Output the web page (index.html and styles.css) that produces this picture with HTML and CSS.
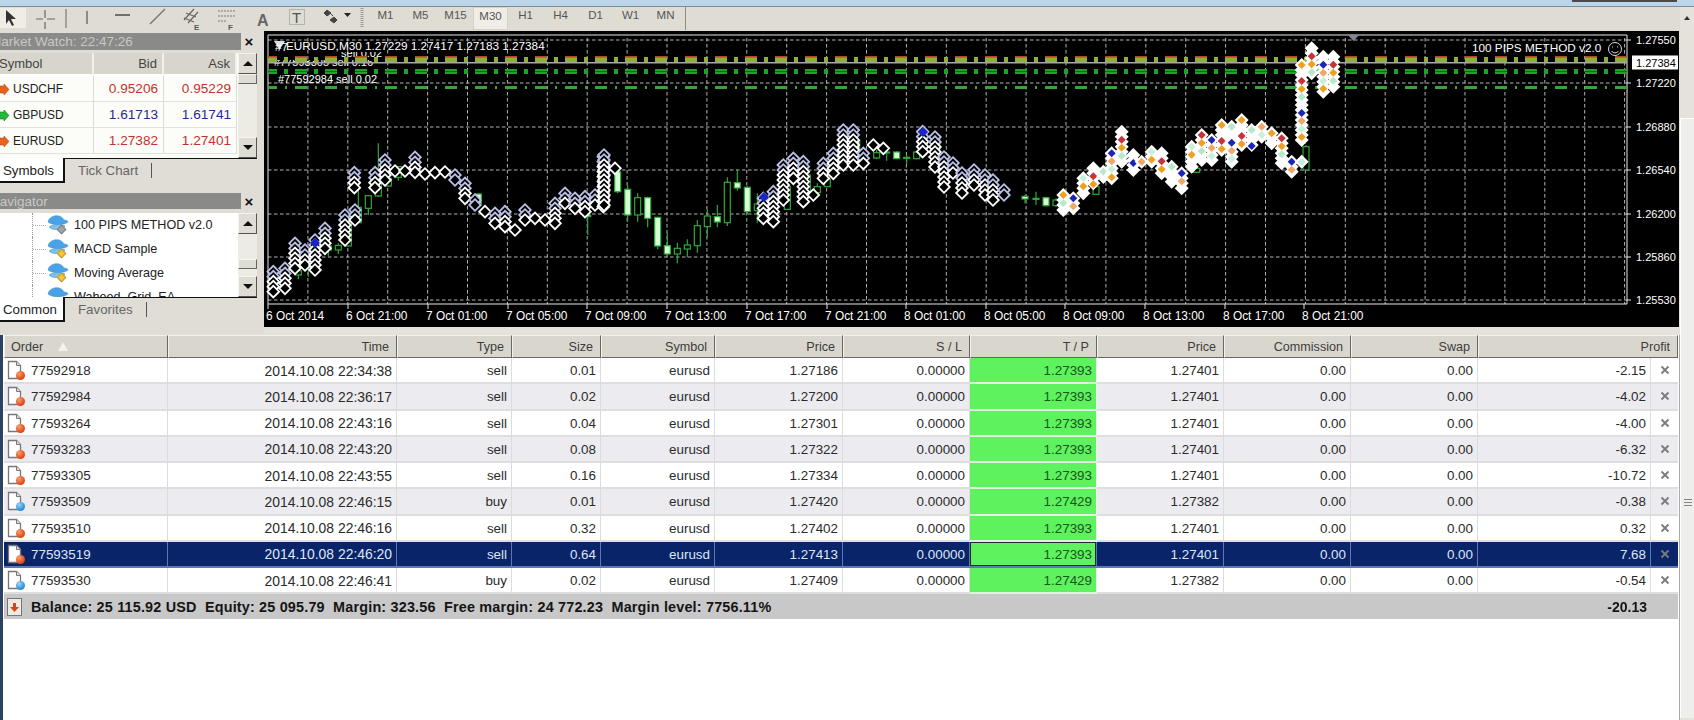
FILE: index.html
```html
<!DOCTYPE html>
<html>
<head>

    <meta charset="utf-8">
    <title>MetaTrader - EURUSD,M30</title>

    <link rel="stylesheet" href="styles.css">

</head>

<body>

<!-- shared icons -->
<svg class="icon-defs" width="0" height="0">
    <symbol id="iconPage" viewBox="0 0 18 20">
        <path d="M1.5 1.5h8l4 4v13h-12z" fill="#fff" stroke="#777" stroke-width="1.3"/>
        <path d="M9.5 1.5v4h4" fill="#ddd" stroke="#777"/>
    </symbol>
    <symbol id="iconHat" viewBox="0 0 22 22">
        <path d="M1 8c1-7 13-9 16-2 2 0 4 1 4 2-3 3-15 4-20 0z" fill="#4aa3e8" stroke="#3a86c0" stroke-width=".5"/>
        <path d="M2 13c4-3 12-3 16-1-3 4-12 5-16 1z" fill="#7cc2ee" stroke="#3a86c0" stroke-width=".5"/>
    </symbol>
    <symbol id="iconArrowRed" viewBox="0 0 12 13">
        <path d="M0 3h6V1l5 5.500-5 5.500v-2H0z" fill="#e8621e" stroke="#b34a14" stroke-width=".6"/>
    </symbol>
    <symbol id="iconArrowGreen" viewBox="0 0 12 13">
        <path d="M0 3h6V1l5 5.500-5 5.500v-2H0z" fill="#27b53a" stroke="#147a22" stroke-width=".6"/>
    </symbol>
    <symbol id="iconClose" viewBox="0 0 10 10">
        <path d="M1.5 1.5l7 7M8.5 1.5l-7 7" fill="none" stroke="#7b7b7b" stroke-width="1.8"/>
    </symbol>
</svg>

<div class="window">

    <div class="app-main">

        <div class="titlebar">
            <div class="titlebar-buttons"></div>
        </div>

        <div class="toolbar">

            <svg class="toolbar-tools" width="364" height="24" viewBox="0 7 364 24">
                <rect x="0" y="8" width="26" height="20" fill="#efede6"/>
                <path d="M6 10l0 14 3-4 3 6 2-1-3-6h5z" fill="#333"/>
                <path d="M45 10v8M45 22v7M36 19h7M47 19h8" stroke="#666" stroke-width="1.2"/>
                <path d="M66 9v19" stroke="#8f8d84" stroke-width="1.5"/>
                <path d="M87 11v13" stroke="#555" stroke-width="1.2"/>
                <path d="M115 15h15" stroke="#555" stroke-width="1.6"/>
                <path d="M150 24l15-15" stroke="#777" stroke-width="1.4"/>
                <path d="M184 20l10-11M188 23l10-11M186 13l10 4M184 18l10 4" stroke="#666" stroke-width="1.2"/>
                <text class="tool-letter-small" x="194" y="30">E</text>
                <path d="M218 11h17M218 16h17M218 21h8" stroke="#777" stroke-width="1.2" stroke-dasharray="2 1"/>
                <text class="tool-letter-small" x="228" y="30">F</text>
                <text class="tool-letter" x="257" y="26">A</text>
                <rect x="289.500" y="9.500" width="15" height="15" fill="none" stroke="#888" stroke-dasharray="1 1"/>
                <text class="tool-letter-t" x="292" y="23">T</text>
                <path d="M327 10l4 3-4 3-3-3zM334 17l3 3-3 3-4-3zM330 13l3 3" fill="#444" stroke="#444"/>
                <path d="M344 13h7l-3.500 4z" fill="#222"/>
                <path d="M362 8v20" stroke="#999" stroke-width="3" stroke-dasharray="1 1"/>
            </svg>

            <div class="timeframes">
                <span class="timeframe">M1</span>
                <span class="timeframe">M5</span>
                <span class="timeframe">M15</span>
                <span class="timeframe timeframe-active">M30</span>
                <span class="timeframe">H1</span>
                <span class="timeframe">H4</span>
                <span class="timeframe">D1</span>
                <span class="timeframe">W1</span>
                <span class="timeframe">MN</span>
            </div>

        </div>

        <div class="workspace">

            <div class="sidebar">

                <div class="panel-title panel-title-market">
                    <div class="panel-title-text">Market Watch: 22:47:26</div>
                    <span class="panel-close">×</span>
                </div>

                <div class="panel-body panel-body-market">
                    <table class="market-table">
                        <colgroup>
                            <col class="market-col-symbol">
                            <col class="market-col-bid">
                            <col class="market-col-ask">
                        </colgroup>
                        <tr>
                            <th class="market-symbol-head">Symbol</th>
                            <th>Bid</th>
                            <th>Ask</th>
                        </tr>
                        <tr>
                            <td class="market-symbol"><svg class="market-icon"><use href="#iconArrowRed"></use></svg>USDCHF</td>
                            <td class="price-down">0.95206</td>
                            <td class="price-down">0.95229</td>
                        </tr>
                        <tr>
                            <td class="market-symbol"><svg class="market-icon"><use href="#iconArrowGreen"></use></svg>GBPUSD</td>
                            <td class="price-up">1.61713</td>
                            <td class="price-up">1.61741</td>
                        </tr>
                        <tr>
                            <td class="market-symbol"><svg class="market-icon"><use href="#iconArrowRed"></use></svg>EURUSD</td>
                            <td class="price-down">1.27382</td>
                            <td class="price-down">1.27401</td>
                        </tr>
                    </table>
                    <div class="scrollbar">
                        <div class="scroll-button"><span class="arrow-up"></span></div>
                        <div class="scroll-track"><div class="scroll-thumb"></div></div>
                        <div class="scroll-button"><span class="arrow-down"></span></div>
                    </div>
                </div>

                <div class="tabs">
                    <span class="tab tab-active">Symbols</span>
                    <span class="tab">Tick Chart</span>
                    <span class="tab-separator"></span>
                </div>

                <div class="panel-title panel-title-nav">
                    <div class="panel-title-text">Navigator</div>
                    <span class="panel-close">×</span>
                </div>

                <div class="panel-body panel-body-nav">
                    <div class="nav-list">
                        <div class="nav-row">
                            <span class="tree-branch"></span>
                            <span class="nav-icon"><svg width="22" height="22"><use href="#iconHat"></use></svg><span class="nav-diamond nav-diamond-gray"></span></span>
                            <span class="nav-label">100 PIPS METHOD v2.0</span>
                        </div>
                        <div class="nav-row">
                            <span class="tree-branch"></span>
                            <span class="nav-icon"><svg width="22" height="22"><use href="#iconHat"></use></svg><span class="nav-diamond"></span></span>
                            <span class="nav-label">MACD Sample</span>
                        </div>
                        <div class="nav-row">
                            <span class="tree-branch"></span>
                            <span class="nav-icon"><svg width="22" height="22"><use href="#iconHat"></use></svg><span class="nav-diamond"></span></span>
                            <span class="nav-label">Moving Average</span>
                        </div>
                        <div class="nav-row">
                            <span class="tree-branch"></span>
                            <span class="nav-icon"><svg width="22" height="22"><use href="#iconHat"></use></svg><span class="nav-diamond"></span></span>
                            <span class="nav-label">Waheed_Grid_EA</span>
                        </div>
                    </div>
                    <div class="scrollbar">
                        <div class="scroll-button"><span class="arrow-up"></span></div>
                        <div class="scroll-track scroll-track-nav"><div class="scroll-thumb"></div></div>
                        <div class="scroll-button"><span class="arrow-down"></span></div>
                    </div>
                </div>

                <div class="tabs">
                    <span class="tab tab-active">Common</span>
                    <span class="tab">Favorites</span>
                    <span class="tab-separator"></span>
                </div>

            </div>

            <div class="chart">
                <svg class="chart-svg" width="1415" height="296" viewBox="264 31 1415 296">
                    <defs>
                        <clipPath id="clipLabelA"><rect x="270" y="60" width="115" height="7"></rect></clipPath>
                        <clipPath id="clipLabelB"><rect x="340" y="52" width="50" height="5"></rect></clipPath>
                    </defs>
                    <g class="chartGrid"></g>
                    <text class="chart-label" x="274" y="66" clip-path="url(#clipLabelA)">#77593305 sell 0.16</text>
                    <text class="chart-label" x="283" y="57" clip-path="url(#clipLabelB)">#77593264 sell 0.02</text>
                    <g class="chartLevels"></g>
                    <g class="chartCandles"></g>
                    <g class="chartMarkers"></g>

                    <path d="M274 41h11l-5.500 9z" fill="#ddd"/>
                    <text class="chart-label chart-label-wide" x="275" y="51">#7</text>
                    <text class="chart-label chart-label-wide" x="286" y="50">EURUSD,M30  1.27229 1.27417 1.27183 1.27384</text>
                    <text class="chart-label" x="278" y="83">#77592984 sell 0.02</text>
                    <text class="chart-label chart-label-wide" x="1472" y="52">100 PIPS METHOD v2.0</text>
                    <circle cx="1615" cy="49" r="6.500" fill="none" stroke="#ddd"/>
                    <path d="M1612 47h1M1617 47h1M1611.500 51c2 2.500 5 2.500 7 0" fill="none" stroke="#ddd"/>
                    <path d="M1348 35h11l-5.500 6z" fill="#7f8a96"/>

                    <rect x="1632" y="55.500" width="46" height="14" fill="#fff"/>
                    <text class="chart-axis chart-axis-dark" x="1636" y="67">1.27384</text>
                    <g class="chartAxis"></g>
                </svg>
            </div>

        </div>

        <div class="terminal">
            <table class="orders-table">
                <colgroup>
                    <col class="col-order"><col class="col-time"><col class="col-type"><col class="col-size">
                    <col class="col-symbol"><col class="col-price"><col class="col-mid"><col class="col-mid">
                    <col class="col-mid"><col class="col-mid"><col class="col-mid"><col class="col-profit">
                    <col class="col-close">
                </colgroup>
                <tr>
                    <th class="head-order">Order<span class="sort-arrow"></span></th>
                    <th>Time</th>
                    <th>Type</th>
                    <th>Size</th>
                    <th>Symbol</th>
                    <th>Price</th>
                    <th>S / L</th>
                    <th>T / P</th>
                    <th>Price</th>
                    <th>Commission</th>
                    <th>Swap</th>
                    <th colspan="2">Profit</th>
                </tr>
                <tr>
                    <td class="cell-order"><svg class="order-icon"><use href="#iconPage"></use></svg><span class="ball ball-sell"></span>77592918</td>
                    <td class="cell-time">2014.10.08 22:34:38</td><td>sell</td><td>0.01</td><td>eurusd</td><td>1.27186</td><td>0.00000</td>
                    <td class="cell-tp">1.27393</td><td>1.27401</td><td>0.00</td><td>0.00</td><td>-2.15</td>
                    <td class="cell-close"><svg class="close-icon"><use href="#iconClose"></use></svg></td>
                </tr>
                <tr class="row-even">
                    <td class="cell-order"><svg class="order-icon"><use href="#iconPage"></use></svg><span class="ball ball-sell"></span>77592984</td>
                    <td class="cell-time">2014.10.08 22:36:17</td><td>sell</td><td>0.02</td><td>eurusd</td><td>1.27200</td><td>0.00000</td>
                    <td class="cell-tp">1.27393</td><td>1.27401</td><td>0.00</td><td>0.00</td><td>-4.02</td>
                    <td class="cell-close"><svg class="close-icon"><use href="#iconClose"></use></svg></td>
                </tr>
                <tr>
                    <td class="cell-order"><svg class="order-icon"><use href="#iconPage"></use></svg><span class="ball ball-sell"></span>77593264</td>
                    <td class="cell-time">2014.10.08 22:43:16</td><td>sell</td><td>0.04</td><td>eurusd</td><td>1.27301</td><td>0.00000</td>
                    <td class="cell-tp">1.27393</td><td>1.27401</td><td>0.00</td><td>0.00</td><td>-4.00</td>
                    <td class="cell-close"><svg class="close-icon"><use href="#iconClose"></use></svg></td>
                </tr>
                <tr class="row-even">
                    <td class="cell-order"><svg class="order-icon"><use href="#iconPage"></use></svg><span class="ball ball-sell"></span>77593283</td>
                    <td class="cell-time">2014.10.08 22:43:20</td><td>sell</td><td>0.08</td><td>eurusd</td><td>1.27322</td><td>0.00000</td>
                    <td class="cell-tp">1.27393</td><td>1.27401</td><td>0.00</td><td>0.00</td><td>-6.32</td>
                    <td class="cell-close"><svg class="close-icon"><use href="#iconClose"></use></svg></td>
                </tr>
                <tr>
                    <td class="cell-order"><svg class="order-icon"><use href="#iconPage"></use></svg><span class="ball ball-sell"></span>77593305</td>
                    <td class="cell-time">2014.10.08 22:43:55</td><td>sell</td><td>0.16</td><td>eurusd</td><td>1.27334</td><td>0.00000</td>
                    <td class="cell-tp">1.27393</td><td>1.27401</td><td>0.00</td><td>0.00</td><td>-10.72</td>
                    <td class="cell-close"><svg class="close-icon"><use href="#iconClose"></use></svg></td>
                </tr>
                <tr class="row-even">
                    <td class="cell-order"><svg class="order-icon"><use href="#iconPage"></use></svg><span class="ball ball-buy"></span>77593509</td>
                    <td class="cell-time">2014.10.08 22:46:15</td><td>buy</td><td>0.01</td><td>eurusd</td><td>1.27420</td><td>0.00000</td>
                    <td class="cell-tp">1.27429</td><td>1.27382</td><td>0.00</td><td>0.00</td><td>-0.38</td>
                    <td class="cell-close"><svg class="close-icon"><use href="#iconClose"></use></svg></td>
                </tr>
                <tr>
                    <td class="cell-order"><svg class="order-icon"><use href="#iconPage"></use></svg><span class="ball ball-sell"></span>77593510</td>
                    <td class="cell-time">2014.10.08 22:46:16</td><td>sell</td><td>0.32</td><td>eurusd</td><td>1.27402</td><td>0.00000</td>
                    <td class="cell-tp">1.27393</td><td>1.27401</td><td>0.00</td><td>0.00</td><td>0.32</td>
                    <td class="cell-close"><svg class="close-icon"><use href="#iconClose"></use></svg></td>
                </tr>
                <tr class="row-selected">
                    <td class="cell-order"><svg class="order-icon"><use href="#iconPage"></use></svg><span class="ball ball-sell"></span>77593519</td>
                    <td class="cell-time">2014.10.08 22:46:20</td><td>sell</td><td>0.64</td><td>eurusd</td><td>1.27413</td><td>0.00000</td>
                    <td class="cell-tp">1.27393</td><td>1.27401</td><td>0.00</td><td>0.00</td><td>7.68</td>
                    <td class="cell-close"><svg class="close-icon"><use href="#iconClose"></use></svg></td>
                </tr>
                <tr>
                    <td class="cell-order"><svg class="order-icon"><use href="#iconPage"></use></svg><span class="ball ball-buy"></span>77593530</td>
                    <td class="cell-time">2014.10.08 22:46:41</td><td>buy</td><td>0.02</td><td>eurusd</td><td>1.27409</td><td>0.00000</td>
                    <td class="cell-tp">1.27429</td><td>1.27382</td><td>0.00</td><td>0.00</td><td>-0.54</td>
                    <td class="cell-close"><svg class="close-icon"><use href="#iconClose"></use></svg></td>
                </tr>
                <tr class="row-summary">
                    <td colspan="11" class="cell-summary"><span class="summary-icon"><svg width="9" height="11"><path d="M3 1h3v4h3l-4.500 5L0 5h3z" fill="#d8441c"/></svg></span>Balance: 25 115.92 USD&nbsp; Equity: 25 095.79&nbsp; Margin: 323.56&nbsp; Free margin: 24 772.23&nbsp; Margin level: 7756.11%</td>
                    <td class="cell-total">-20.13</td>
                    <td></td>
                </tr>
            </table>
        </div>

    </div>

    <div class="right-strip">
        <span class="strip-arrow"></span>
        <div class="strip-lower">
            <span class="strip-grip"></span>
        </div>
    </div>

</div>

<script src="chart.js"></script>

</body>
</html>
```

FILE: styles.css
```css
* {
    font-family: "Liberation Sans", Arial, sans-serif;
    box-sizing: border-box;
}

html, body {
    margin: 0;
    height: 720px;
    overflow: hidden;
    background: #fff;
}

.icon-defs {
    display: block;
    height: 0;
}

.window {
    display: flex;
    height: 720px;
    filter: blur(0.45px);
}

.app-main {
    width: 1680px;
    display: flex;
    flex-direction: column;
}

.titlebar {
    height: 7px;
    background: #bcd5e8;
    border-bottom: 1px solid #7f8d9a;
    margin-right: -14px;
    display: flex;
    justify-content: flex-end;
}

.titlebar-buttons {
    width: 105px;
    height: 2px;
    margin-right: 17px;
    background: #4a4a4a;
}

/* toolbar */

.toolbar {
    height: 24px;
    display: flex;
    background: #dfddd3;
    color: #555;
}

.toolbar-tools {
    display: block;
    flex-shrink: 0;
}

.tool-letter {
    font-size: 16px;
    font-weight: bold;
    fill: #666;
}

.tool-letter-small {
    font-size: 8px;
    font-weight: bold;
    fill: #555;
}

.tool-letter-t {
    font-size: 15px;
    fill: #555;
}

.timeframes {
    display: flex;
    padding-left: 4px;
    padding-right: 2px;
    border-right: 1px solid #8f8d84;
    height: 23px;
}

.timeframe {
    width: 35px;
    height: 23px;
    line-height: 17px;
    text-align: center;
    font-size: 11.500px;
    color: #555;
}

.timeframe-active {
    background: #efede6;
    border: 1px solid #d4d2c8;
}

/* main row */

.workspace {
    height: 304px;
    display: flex;
    background: #e4e2da;
}

.sidebar {
    width: 264px;
    height: 304px;
    flex-shrink: 0;
    overflow: hidden;
    padding-top: 2px;
    background: #dfddd5;
}

.panel-title {
    display: flex;
    width: 267px;
    margin-left: -10px;
    align-items: center;
}

.panel-title-market {
    height: 17px;
}

.panel-title-nav {
    height: 16px;
    margin-top: 8px;
}

.panel-title-text {
    width: 251px;
    height: 100%;
    background: #8a8a88;
    color: #c8c8c6;
    font-size: 13.500px;
    line-height: 17px;
    white-space: nowrap;
}

.panel-close {
    width: 16px;
    text-align: center;
    font-size: 15px;
    font-weight: bold;
    color: #111;
}

.panel-body {
    display: flex;
    width: 267px;
    margin-left: -10px;
    overflow: hidden;
    background: #fff;
}

.panel-body-market {
    height: 105px;
    margin-top: 3px;
    background: #fcfdf8;
}

.panel-body-nav {
    height: 84px;
    margin-top: 4px;
}

.market-table {
    width: 247px;
    height: 0;
    table-layout: fixed;
    border-collapse: separate;
    border-spacing: 0;
    flex-shrink: 0;
}

.market-col-symbol {
    width: 104px;
}

.market-col-bid {
    width: 70px;
}

.market-col-ask {
    width: 73px;
}

.market-table th {
    height: 23px;
    padding: 0 5px 0 0;
    background: #d8d6cc;
    border-right: 2px solid #f2f0e8;
    border-bottom: 2px solid #fff;
    color: #444;
    font-size: 13px;
    font-weight: normal;
    text-align: right;
}

.market-table th.market-symbol-head {
    padding-left: 9px;
    text-align: left;
}

.market-table td {
    height: 26px;
    padding: 0 5px 0 0;
    border-right: 1px solid #dcdcd6;
    border-bottom: 1px solid #e2e2dc;
    font-size: 13.600px;
    text-align: right;
}

.market-table td.market-symbol {
    padding-left: 8px;
    font-size: 12px;
    color: #222;
    text-align: left;
    white-space: nowrap;
}

.market-icon {
    width: 12px;
    height: 13px;
    margin-right: 3px;
    vertical-align: -3px;
}

.price-down {
    color: #c4332f;
}

.price-up {
    color: #27289b;
}

/* scrollbars */

.scrollbar {
    width: 19px;
    flex-shrink: 0;
    margin-left: 1px;
    display: flex;
    flex-direction: column;
    background: #ecebe4;
}

.scroll-button {
    height: 21px;
    flex-shrink: 0;
    display: flex;
    align-items: center;
    justify-content: center;
    background: #dfddd3;
    border: 1px solid;
    border-color: #f4f3ec #555 #555 #f4f3ec;
}

.arrow-up {
    border: 5px solid transparent;
    border-top: 0;
    border-bottom: 5px solid #111;
}

.arrow-down {
    border: 5px solid transparent;
    border-bottom: 0;
    border-top: 5px solid #111;
}

.scroll-track {
    flex: 1;
}

.scroll-thumb {
    height: 10px;
    background: #dfddd3;
    border: 1px solid;
    border-color: #f4f3ec #666 #666 #f4f3ec;
}

.scroll-track-nav .scroll-thumb {
    margin-top: 25px;
}

/* sidebar tabs */

.tabs {
    height: 27px;
    width: 267px;
    margin-left: -10px;
    display: flex;
    align-items: flex-start;
    border-top: 1px solid #111;
    color: #666;
}

.tab {
    height: 24px;
    line-height: 24px;
    padding: 0 13px;
    font-size: 13.300px;
    white-space: nowrap;
}

.tab-active {
    width: 75px;
    height: 25px;
    margin-top: -1px;
    padding: 0 0 0 13px;
    line-height: 25px;
    background: #fff;
    color: #222;
    border-right: 2px solid #111;
    border-bottom: 2px solid #111;
}

.tab-separator {
    width: 1px;
    height: 15px;
    margin-top: 4px;
    background: #555;
}

/* navigator */

.nav-list {
    width: 247px;
    flex-shrink: 0;
    overflow: hidden;
}

.nav-row {
    height: 24px;
    display: flex;
    align-items: center;
    white-space: nowrap;
}

.tree-branch {
    width: 15px;
    height: 24px;
    margin-left: 42px;
    border-left: 1px dotted #999;
    background: repeating-linear-gradient(90deg, #aaa 0 1px, transparent 1px 2px) center / 100% 1px no-repeat;
}

.nav-icon {
    width: 24px;
    height: 22px;
    flex-shrink: 0;
    display: block;
    position: relative;
    margin-right: 3px;
}

.nav-diamond {
    position: absolute;
    left: 11px;
    top: 12px;
    width: 7px;
    height: 7px;
    transform: rotate(45deg);
    background: #f1c53f;
    border: 1px solid #c49a30;
}

.nav-diamond-gray {
    background: #a4a4a4;
    border-color: #808080;
}

.nav-label {
    font-size: 12.600px;
    color: #222;
}

/* chart */

.chart {
    width: 1415px;
    height: 296px;
    flex-shrink: 0;
    background: #000;
}

.chart-svg {
    display: block;
}

.chart-label {
    font-size: 11px;
    fill: #fff;
}

.chart-label-wide {
    font-size: 11.750px;
}

.chart-axis {
    font-size: 11px;
    fill: #fff;
}

.chart-time {
    font-size: 11.900px;
    fill: #fff;
}

.chart-axis-dark {
    fill: #000;
}

/* terminal */

.terminal {
    flex: 1;
    background: #fff;
    border-left: 3px solid #2d4162;
    border-right: 1px solid #a9a9a9;
    padding-left: 1px;
}

.orders-table {
    width: 1674px;
    table-layout: fixed;
    border-collapse: separate;
    border-spacing: 0;
    color: #2b2b2b;
}

.col-order { width: 164px; }
.col-time { width: 229px; }
.col-type { width: 115px; }
.col-size { width: 89px; }
.col-symbol { width: 114px; }
.col-price { width: 128px; }
.col-mid { width: 127px; }
.col-profit { width: 173px; }
.col-close { width: 27px; }

.orders-table th {
    height: 23px;
    padding: 0 7px 0 0;
    background: #d9d7cd;
    border: 1px solid;
    border-color: #f3f2ea #666 #666 #f3f2ea;
    color: #3d3d3d;
    font-size: 12.600px;
    font-weight: normal;
    text-align: right;
}

.orders-table th.head-order {
    padding-left: 6px;
    text-align: left;
}

.sort-arrow {
    display: inline-block;
    margin-left: 15px;
    border: 5px solid transparent;
    border-top: 0;
    border-bottom: 9px solid #f2f1ea;
}

.orders-table td {
    height: 26.250px;
    padding: 1px 4px 0 0;
    border-right: 1px solid #dcdcdc;
    border-bottom: 2px solid #dedede;
    font-size: 13.400px;
    text-align: right;
    white-space: nowrap;
}

.orders-table td.cell-order {
    position: relative;
    padding-left: 27px;
    text-align: left;
}

.orders-table td.cell-time {
    font-size: 13.900px;
}

.order-icon {
    position: absolute;
    left: 3px;
    top: 2px;
    width: 18px;
    height: 20px;
}

.ball {
    position: absolute;
    left: 12px;
    top: 13px;
    width: 9px;
    height: 9px;
    border-radius: 50%;
}

.ball-sell {
    background: radial-gradient(circle at 35% 30%, #f4a070, #e04a18 65%);
}

.ball-buy {
    background: radial-gradient(circle at 35% 30%, #9fd4f6, #2c8fd8 65%);
}

.row-even td {
    background: #ecebef;
}

.row-selected td {
    background: #0a246a;
    color: #dfe6f6;
    border-right-color: #5f78b4;
    border-bottom-color: #5f78b4;
}

.orders-table td.cell-tp {
    background: #5ef25e;
    color: #17551f;
    border-right-color: #e8f8e8;
    border-bottom-color: #e0f2e0;
}

.row-selected td.cell-tp {
    box-shadow: inset 0 0 0 1px #1d2b2a;
    border-right-color: #5f78b4;
    border-bottom-color: #5f78b4;
}

.orders-table td.cell-close {
    padding: 0;
    border-right: 0;
    text-align: left;
}

.close-icon {
    display: block;
    width: 10px;
    height: 10px;
    margin-left: 9px;
}

.row-summary td {
    height: 25px;
    background: #c8c8c8;
    border: 0;
    color: #151515;
    font-weight: bold;
}

.orders-table .row-summary td.cell-summary {
    padding-left: 27px;
    position: relative;
    font-size: 14.400px;
    letter-spacing: 0.18px;
    text-align: left;
}

.orders-table .row-summary td.cell-total {
    font-size: 14px;
}

.summary-icon {
    position: absolute;
    left: 3px;
    top: 4px;
    width: 15px;
    height: 18px;
    background: #eceae2;
    border: 1px solid #777;
    display: flex;
    justify-content: center;
    align-items: center;
}

/* right edge of the window */

.right-strip {
    width: 14px;
    margin-top: 7px;
    background: #e4e2da;
    display: flex;
    flex-direction: column;
    align-items: center;
}

.strip-arrow {
    margin-top: 9px;
    border: 3px solid transparent;
    border-top: 0;
    border-bottom: 4px solid #333;
}

.strip-lower {
    width: 100%;
    height: 600px;
    margin-top: 98px;
    border-top: 1px solid #fff;
    border-left: 1px solid #fff;
    background: #eeeeec;
    display: flex;
    justify-content: center;
}

.strip-grip {
    width: 8px;
    height: 9px;
    margin-top: 380px;
    background: repeating-linear-gradient(180deg, #888 0 1px, transparent 1px 3px);
}
```

FILE: chart.js
```js
var plotLeft = 268;
var plotRight = 1627;
var plotTop = 35;
var plotBottom = 304;

var gridGroup = document.querySelector('.chartGrid');
var levelsGroup = document.querySelector('.chartLevels');
var candlesGroup = document.querySelector('.chartCandles');
var markersGroup = document.querySelector('.chartMarkers');
var axisGroup = document.querySelector('.chartAxis');

// price scale, label and y
var priceLabels = [
    ['1.27550', 40], ['1.27220', 83], ['1.26880', 127], ['1.26540', 170],
    ['1.26200', 214], ['1.25860', 257], ['1.25530', 300]
];

var timeLabels = [
    ['6 Oct 2014', 266], ['6 Oct 21:00', 346], ['7 Oct 01:00', 426], ['7 Oct 05:00', 506],
    ['7 Oct 09:00', 585], ['7 Oct 13:00', 665], ['7 Oct 17:00', 745], ['7 Oct 21:00', 825],
    ['8 Oct 01:00', 904], ['8 Oct 05:00', 984], ['8 Oct 09:00', 1063], ['8 Oct 13:00', 1143],
    ['8 Oct 17:00', 1223], ['8 Oct 21:00', 1302]
];

// candles are x, high, low, body top, body bottom, filled
// measured from 3x crops, so kept in crop units with the crop origin beside them
var candlesLeft = [
    [100, 505, 538, 512, 525, 0], [130, 490, 530, 500, 504, 0], [190, 430, 470, 438, 450, 1],
    [220, 430, 462, 436, 450, 0], [250, 345, 440, 360, 438, 0], [280, 260, 370, 322, 368, 0],
    [310, 285, 345, 287, 325, 0], [340, 130, 290, 235, 288, 0], [370, 225, 260, 235, 258, 0],
    [400, 198, 242, 200, 232, 0], [640, 280, 312, 282, 310, 1], [968, 345, 405, 345, 350, 1]
];

var candlesMiddle = [
    [53, 205, 280, 215, 275, 1], [83, 255, 365, 268, 345, 1], [113, 280, 365, 293, 345, 0],
    [143, 290, 382, 293, 355, 1], [173, 350, 448, 352, 438, 1], [202, 398, 465, 437, 462, 1],
    [232, 428, 490, 445, 462, 0], [262, 418, 472, 435, 447, 0], [292, 360, 458, 377, 437, 0],
    [322, 328, 412, 348, 380, 0], [352, 315, 382, 350, 366, 1], [382, 232, 378, 247, 368, 0],
    [412, 208, 272, 248, 264, 1], [442, 258, 342, 262, 335, 1], [472, 280, 368, 312, 332, 0],
    [562, 250, 330, 260, 328, 0], [622, 222, 290, 225, 285, 0], [652, 250, 290, 260, 278, 0],
    [682, 236, 262, 238, 260, 0], [770, 120, 160, 122, 150, 1], [830, 150, 178, 158, 174, 0],
    [860, 155, 182, 156, 158, 1], [890, 154, 178, 156, 176, 1], [920, 165, 192, 172, 174, 1],
    [950, 154, 178, 156, 176, 0], [1010, 105, 170, 108, 165, 1]
];

var candlesRight = [
    [-45, 480, 505, 484, 492, 1], [-12, 470, 510, 490, 492, 1], [18, 485, 515, 488, 512, 1],
    [48, 490, 515, 495, 512, 0], [168, 440, 480, 455, 478, 0], [470, 395, 415, 400, 412, 0],
    [798, 330, 405, 335, 405, 0]
];

// black markers: x, top, bottom of a column, in crop units
var blackLeft = [
    [25, 515, 585], [60, 505, 570], [90, 430, 510], [120, 450, 500], [150, 420, 510],
    [180, 385, 445], [240, 345, 430], [270, 330, 360], [268, 218, 265], [330, 218, 268],
    [360, 180, 240], [450, 172, 230], [390, 213, 213], [420, 213, 213], [480, 222, 222],
    [510, 218, 218], [540, 216, 216], [570, 225, 250], [600, 250, 300], [630, 300, 322],
    [660, 335, 335], [690, 340, 372], [720, 335, 385], [750, 390, 390], [780, 330, 365],
    [810, 355, 355], [840, 360, 360], [870, 310, 370], [900, 280, 320], [930, 295, 335],
    [960, 290, 335], [990, 285, 325], [1015, 170, 320]
];

var blackMiddle = [
    [12, 165, 325], [45, 205, 205], [490, 295, 365], [520, 275, 365], [550, 195, 300],
    [580, 175, 250], [610, 185, 310], [640, 285, 285], [670, 190, 250], [700, 160, 230],
    [730, 90, 200], [760, 90, 200], [790, 160, 205], [820, 135, 135], [850, 145, 145],
    [968, 95, 160], [1005, 111, 210], [1032, 171, 261], [1059, 189, 231], [1086, 219, 291],
    [1122, 210, 261], [1155, 225, 285], [1179, 240, 300], [1212, 270, 285]
];

var colorRight = [
    [70, 480, 535], [100, 490, 525], [130, 430, 475], [160, 400, 455], [190, 410, 435],
    [215, 355, 435], [245, 290, 385], [280, 360, 405], [305, 380, 380], [335, 350, 395],
    [365, 355, 425], [395, 395, 440], [425, 415, 460], [455, 335, 405], [485, 300, 375],
    [515, 315, 375], [545, 270, 355], [575, 275, 395], [605, 255, 335], [635, 285, 335],
    [665, 275, 315], [695, 295, 335], [725, 310, 395], [755, 380, 420], [785, 380, 380],
    [785, 90, 325], [815, 40, 115], [850, 65, 185], [880, 65, 165]
];

var markerColors = ['#f0a020', '#b8e8c8', '#fff', '#1a24b8', '#f0a868', '#c9f0d8', '#f0a020', '#fff', '#c8323a'];

function rect(x, y, w, h, fill){
    return '<rect x="' + x + '" y="' + y + '" width="' + w + '" height="' + h + '" fill="' + fill + '"/>';
}

function line(x1, y1, x2, y2, color, extra){
    return '<line x1="' + x1 + '" y1="' + y1 + '" x2="' + x2 + '" y2="' + y2 + '" stroke="' + color + '" ' + (extra || '') + '/>';
}

function diamond(x, y, size){
    return 'M' + (x - size) + ' ' + y + 'L' + x + ' ' + (y - size) + 'L' + (x + size) + ' ' + y + 'L' + x + ' ' + (y + size) + 'Z';
}

function drawGrid(){

    var html = '';
    var dash = 'stroke-dasharray="3.5 2.5"';

    for (var x = 268 + 39.9; x < plotRight; x = x + 39.9) {
        html += line(x, plotTop + 3, x, plotBottom, '#b4b4b4', dash);
    }

    for (var i = 0; i < priceLabels.length; i = i + 1) {
        html += line(plotLeft, priceLabels[i][1], plotRight, priceLabels[i][1], '#b4b4b4', dash);
    }

    html += line(plotLeft, plotTop, plotRight, plotTop, '#e8e8e8');
    html += line(plotRight, plotTop, plotRight, plotBottom, '#e8e8e8');
    html += line(plotLeft, plotBottom, plotRight, plotBottom, '#e8e8e8');
    html += line(plotLeft, plotTop, plotLeft, plotBottom, '#e8e8e8');

    gridGroup.innerHTML = html;

}

function drawLevels(){

    var html = '';

    // long dash, gap, short dash, gap; the pattern repeats every 30px
    for (var dashX = 265; dashX < plotRight; dashX = dashX + 30) {

        var x = Math.max(dashX, plotLeft);
        var longWidth = Math.min(dashX + 12, plotRight) - x;
        var shortX = dashX + 19;
        var shortWidth = shortX < plotRight ? Math.min(4, plotRight - shortX) : 0;

        html += rect(x, 57, longWidth, 5, '#8fae3a') + rect(x, 56, longWidth, 1.500, '#b0452a');
        html += rect(x, 69, longWidth, 5, '#22a02c') + rect(x, 71, longWidth, 1, '#0e6a18');
        html += rect(x, 86, longWidth, 3, '#3aa23a');

        if (shortWidth > 0) {
            html += rect(shortX, 57, shortWidth, 5, '#8fae3a');
            html += rect(shortX, 69, shortWidth, 5, '#22a02c');
            html += rect(shortX + 1, 86, 2, 3, '#3aa23a');
        }

    }

    html += rect(plotLeft, 62, plotRight - plotLeft, 1.500, '#a8a8a8');

    levelsGroup.innerHTML = html;

}

function drawCandleSet(list, originX, originY){

    var html = '';

    for (var i = 0; i < list.length; i = i + 1) {

        var c = list[i];
        var x = originX + c[0] / 3;
        var top = originY + c[3] / 3;
        var height = Math.max((c[4] - c[3]) / 3, 1);

        html += line(x, originY + c[1] / 3, x, originY + c[2] / 3, '#2fa838', 'stroke-width="1.2"');
        html += '<rect x="' + (x - 3) + '" y="' + top + '" width="6" height="' + height + '" fill="' + (c[5] ? '#d6ffd6' : '#000') + '" stroke="#2fa838" stroke-width="1.2"/>';

    }

    return html;

}

function drawBlackMarkers(list, originX, originY){

    var html = '';

    for (var i = 0; i < list.length; i = i + 1) {

        var x = originX + list[i][0] / 3;
        var top = originY + list[i][1] / 3;
        var bottom = originY + list[i][2] / 3;
        var isColumn = bottom > top;

        for (var y = top; y <= bottom; y = y + 5) {
            var stroke = (isColumn && y < top + 9) ? '#b9c0e4' : '#fff';
            html += '<path d="' + diamond(x, y, 5.8) + '" fill="#000" stroke="' + stroke + '" stroke-width="1.8"/>';
        }

    }

    return html;

}

function drawColorMarkers(list, originX, originY){

    var html = '';
    var colorIndex = 0;

    for (var i = 0; i < list.length; i = i + 1) {

        var x = originX + list[i][0] / 3;
        var top = originY + list[i][1] / 3;
        var bottom = originY + list[i][2] / 3;

        for (var y = top; y <= bottom; y = y + 5) {
            html += '<path d="' + diamond(x, y, 7) + '" fill="#fff"/>';
        }

        for (var inner = top; inner <= bottom; inner = inner + 8) {
            html += '<path d="' + diamond(x, inner, 4) + '" fill="' + markerColors[colorIndex % markerColors.length] + '"/>';
            colorIndex = colorIndex + 1;
        }

    }

    return html;

}

function drawAxis(){

    var html = '';

    for (var i = 0; i < priceLabels.length; i = i + 1) {
        html += line(plotRight, priceLabels[i][1], plotRight + 4, priceLabels[i][1], '#e8e8e8');
        html += '<text class="chart-axis" x="1636" y="' + (priceLabels[i][1] + 4) + '">' + priceLabels[i][0] + '</text>';
    }

    for (var j = 0; j < timeLabels.length; j = j + 1) {
        html += line(timeLabels[j][1] + 2, plotBottom, timeLabels[j][1] + 2, plotBottom + 5, '#e8e8e8');
        html += '<text class="chart-time" x="' + timeLabels[j][1] + '" y="320">' + timeLabels[j][0] + '</text>';
    }

    axisGroup.innerHTML = html;

}

function drawBlueMark(x, y){
    return '<path d="' + diamond(x, y, 5) + '" fill="#1a24c8"/>';
}

function init(){

    drawGrid();
    drawLevels();

    candlesGroup.innerHTML =
        drawCandleSet(candlesLeft, 265, 100) +
        drawCandleSet(candlesMiddle, 600, 100) +
        drawCandleSet(candlesRight, 1040, 35);

    markersGroup.innerHTML =
        drawBlackMarkers(blackLeft, 265, 100) +
        drawBlackMarkers(blackMiddle, 600, 100) +
        drawBlueMark(315, 243) + drawBlueMark(764, 197) + drawBlueMark(923, 132) +
        drawColorMarkers(colorRight, 1040, 35);

    drawAxis();

}

init();
```
